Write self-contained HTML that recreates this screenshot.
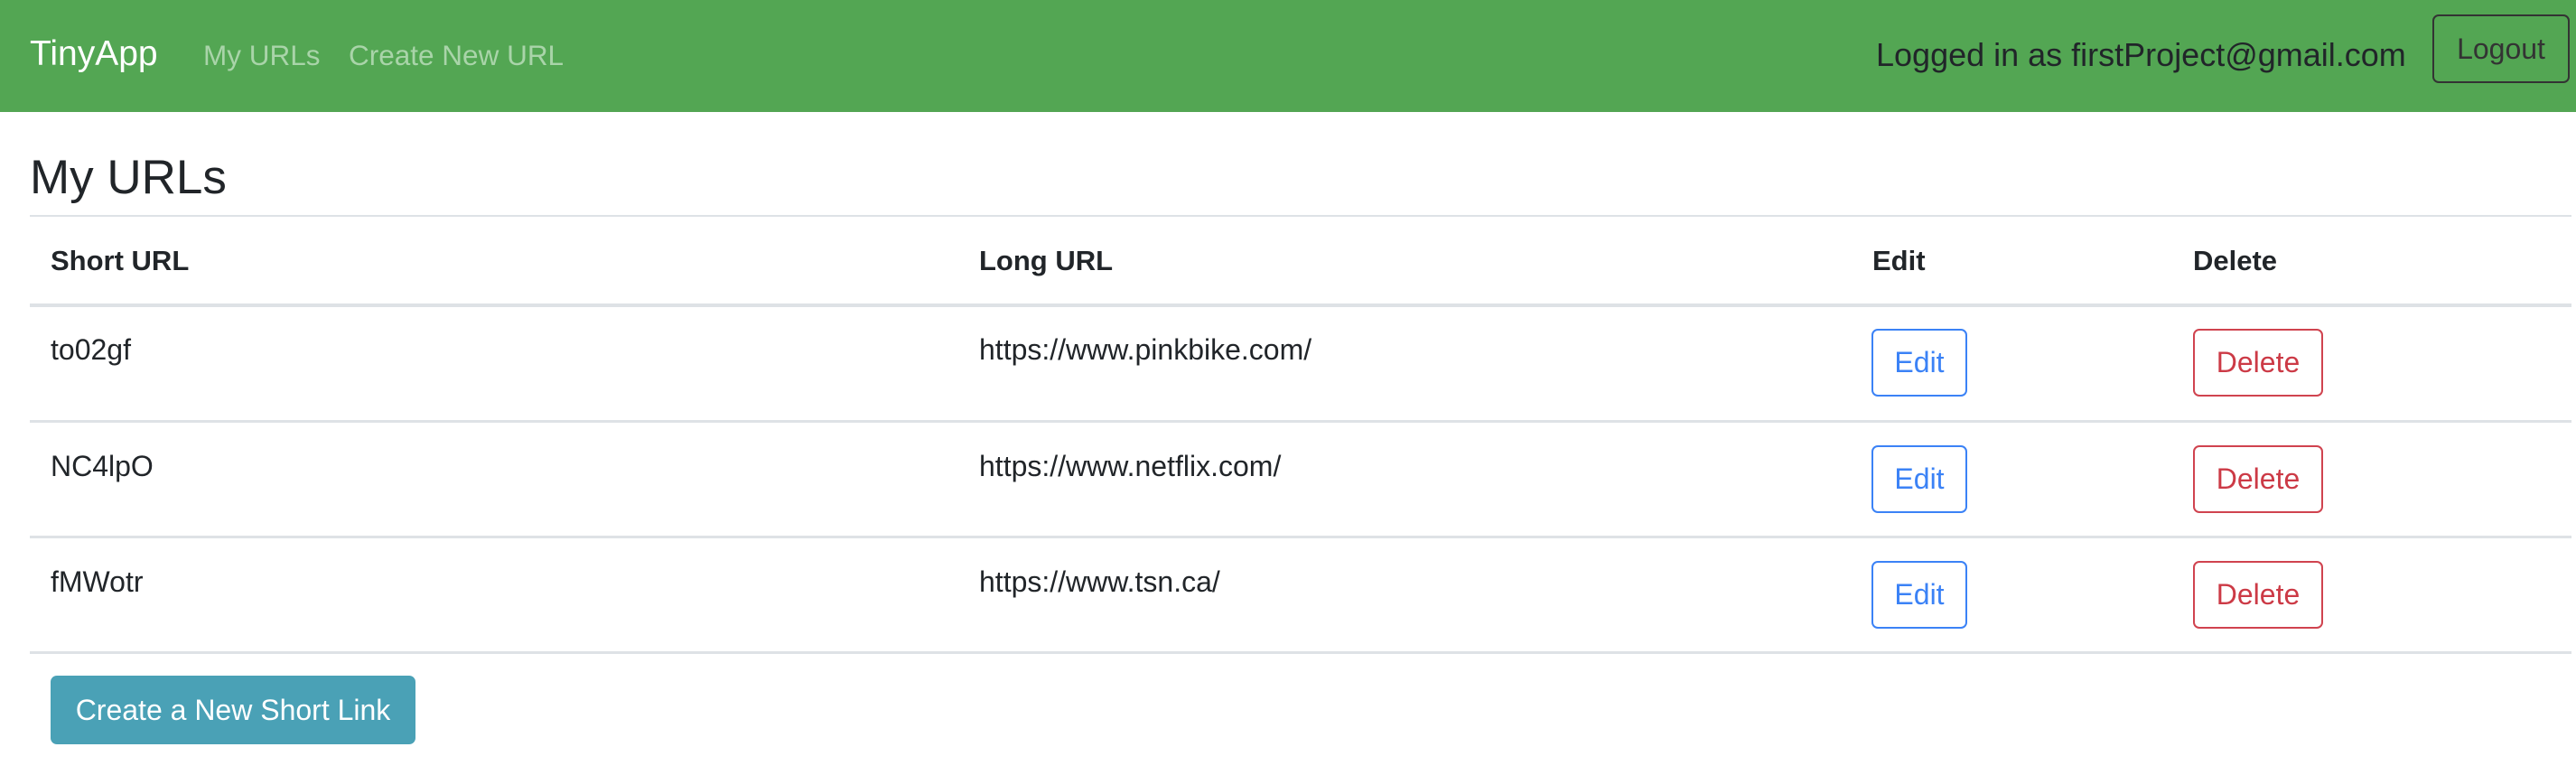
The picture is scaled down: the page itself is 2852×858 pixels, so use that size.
<!DOCTYPE html>
<html><head><meta charset="utf-8"><style>
*{margin:0;padding:0;box-sizing:border-box}
body{width:2852px;height:858px;background:#fff;position:relative;overflow:hidden;font-family:"Liberation Sans",Arial,sans-serif;color:#212529}
.a{position:absolute;white-space:nowrap;line-height:1}
.nav{position:absolute;left:0;top:0;width:2852px;height:124px;background:#53a653}
.line{position:absolute;left:33px;width:2814px;background:#dee2e6}
.b{font-weight:bold;font-size:31px}
.t{font-size:32px}
.btn{position:absolute;border-radius:7px;font-size:32px;display:flex;align-items:center;justify-content:center}
.e{width:106px;height:75px;border:2px solid #3b82f6;color:#3b82f6;left:2072px}
.d{width:144px;height:75px;border:2px solid #d0434f;color:#cc3a46;left:2428px}
</style></head><body>
<div class="nav"></div>
<div class="a" style="left:33px;top:40px;font-size:39px;color:#fff">TinyApp</div>
<div class="a" style="left:225px;top:46px;font-size:31.5px;color:#a9d4a9">My URLs</div>
<div class="a" style="left:386px;top:46px;font-size:31.5px;color:#a9d4a9">Create New URL</div>
<div class="a" style="left:2077px;top:43px;font-size:36px;color:#212529">Logged in as firstProject@gmail.com</div>
<div class="btn" style="left:2693px;top:16px;width:152px;height:76px;border:2px solid #333;color:#333">Logout</div>
<div class="a" style="left:33px;top:170px;font-size:53px">My URLs</div>
<div class="line" style="top:238px;height:2px"></div>
<div class="a b" style="left:56px;top:273px">Short URL</div>
<div class="a b" style="left:1084px;top:273px">Long URL</div>
<div class="a b" style="left:2073px;top:273px">Edit</div>
<div class="a b" style="left:2428px;top:273px">Delete</div>
<div class="line" style="top:336px;height:4px"></div>
<div class="a t" style="left:56px;top:371px">to02gf</div>
<div class="a t" style="left:1084px;top:371px">https://www.pinkbike.com/</div>
<div class="btn e" style="top:364px">Edit</div>
<div class="btn d" style="top:364px">Delete</div>
<div class="line" style="top:465px;height:3px"></div>
<div class="a t" style="left:56px;top:500px">NC4lpO</div>
<div class="a t" style="left:1084px;top:500px">https://www.netflix.com/</div>
<div class="btn e" style="top:493px">Edit</div>
<div class="btn d" style="top:493px">Delete</div>
<div class="line" style="top:593px;height:3px"></div>
<div class="a t" style="left:56px;top:628px">fMWotr</div>
<div class="a t" style="left:1084px;top:628px">https://www.tsn.ca/</div>
<div class="btn e" style="top:621px">Edit</div>
<div class="btn d" style="top:621px">Delete</div>
<div class="line" style="top:721px;height:3px"></div>
<div class="btn" style="left:56px;top:748px;width:404px;height:76px;background:#4aa1b6;color:#fff">Create a New Short Link</div>
</body></html>
